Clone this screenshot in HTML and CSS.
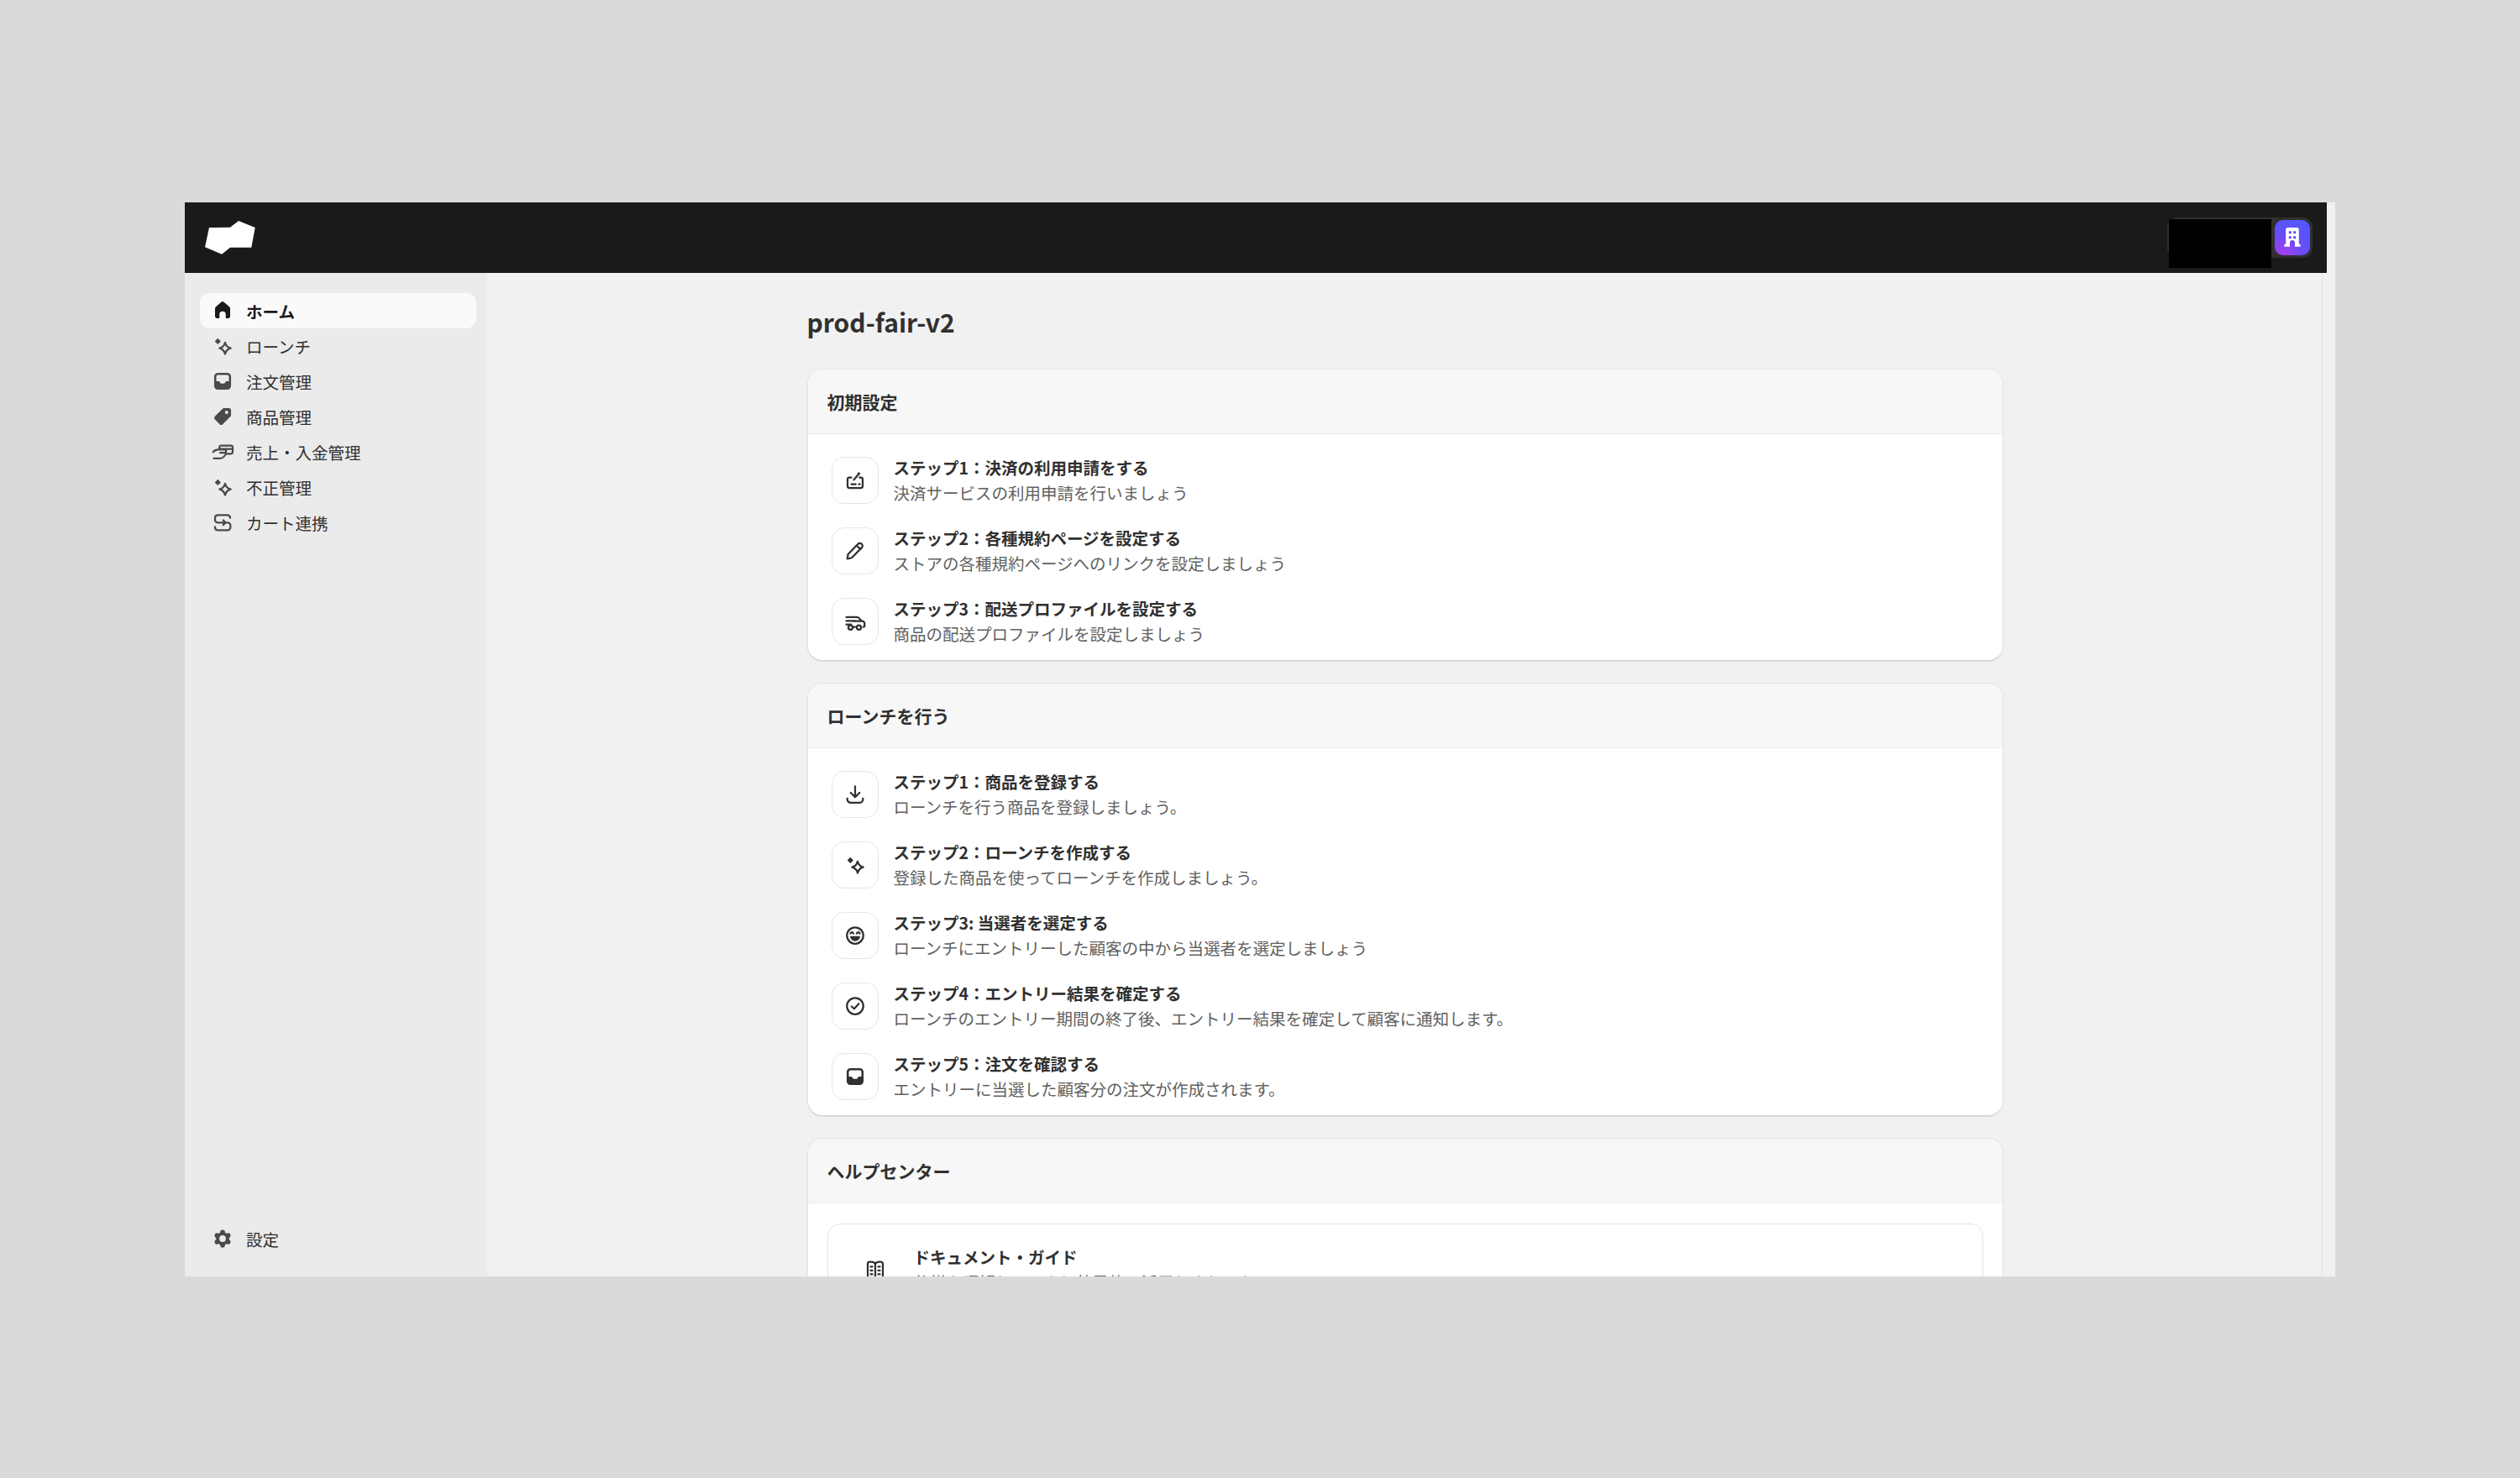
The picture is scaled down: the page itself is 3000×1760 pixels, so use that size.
FILE: index.html
```html
<!DOCTYPE html>
<html lang="ja">
<head>
<meta charset="utf-8">
<title>prod-fair-v2</title>
<link rel="stylesheet" href="styles.css">
</head>
<body>
<svg class="defs" width="0" height="0" aria-hidden="true">
  <symbol id="i-sparkle" viewBox="0 0 20 20">
    <path class="fill" d="M6.2 3.8 8.6 6.3 6.2 8.7 3.8 6.3Z"/>
    <path class="line" d="M12 7.2c.6 2.6 1.8 3.9 4.4 4.6-2.6.7-3.8 2-4.4 4.6-.6-2.6-1.8-3.9-4.4-4.6 2.6-.7 3.8-2 4.4-4.6Z"/>
  </symbol>
  <symbol id="i-inbox" viewBox="0 0 20 20">
    <path class="fill" fill-rule="evenodd" d="M6.3 3.3h7.4a3 3 0 0 1 3 3v7.4a3 3 0 0 1-3 3H6.3a3 3 0 0 1-3-3V6.3a3 3 0 0 1 3-3ZM6.3 5A1.3 1.3 0 0 0 5 6.300V10h2.300c.5 1.300 1.400 1.900 2.700 1.900s2.200-.6 2.700-1.900H15V6.300A1.300 1.300 0 0 0 13.700 5Z"/>
  </symbol>
</svg>
<div class="window">
  <header class="topbar">
    <svg class="logo" viewBox="0 0 60 40"><path d="M5 8 30 7.700 40 0 59.700 8 55.300 31.700H30L20 39.700 0 31.300Z"/></svg>
    <div class="account">
      <div class="account-name"></div>
      <div class="account-icon">
        <svg viewBox="0 0 30 30"><path fill-rule="evenodd" d="M10.500 5h9A2 2 0 0 1 21.500 7V21.500H23V24H17.500V20a2.500 2.500 0 0 0-5 0V24H7V21.500H8.500V7a2 2 0 0 1 2-2ZM11.500 8.500V11H14V8.500ZM16 8.500V11H18.500V8.500ZM11.500 13.500V16H14V13.500ZM16 13.500V16H18.500V13.500Z"/></svg>
      </div>
    </div>
  </header>
  <div class="frame">
    <nav class="sidebar">
      <ul class="nav-list">
        <li class="nav-item active"><svg class="nav-icon" viewBox="0 0 20 20"><path class="fill" d="M8.900 3.200a1.700 1.700 0 0 1 2.200 0L15.300 6.800A2 2 0 0 1 16 8.300V14.500A1.500 1.500 0 0 1 14.500 16H12.500V13a2.500 2.500 0 0 0-5 0V16H5.500A1.500 1.500 0 0 1 4 14.500V8.300A2 2 0 0 1 4.700 6.800Z"/></svg>ホーム</li>
        <li class="nav-item"><svg class="nav-icon"><use href="#i-sparkle"/></svg>ローンチ</li>
        <li class="nav-item"><svg class="nav-icon"><use href="#i-inbox"/></svg>注文管理</li>
        <li class="nav-item"><svg class="nav-icon" viewBox="0 0 20 20"><path class="fill" fill-rule="evenodd" d="M11.200 3.300H15A1.700 1.700 0 0 1 16.700 5V8.800A1.700 1.700 0 0 1 16.200 10L10.100 16.100A1.700 1.700 0 0 1 7.700 16.100L3.900 12.300A1.700 1.700 0 0 1 3.900 9.900L10 3.800A1.700 1.700 0 0 1 11.200 3.300ZM13.200 5.400a1.300 1.300 0 1 0 0 2.600 1.300 1.300 0 0 0 0-2.600Z"/></svg>商品管理</li>
        <li class="nav-item"><svg class="nav-icon" viewBox="0 0 20 20"><path class="line" d="M7.500 8V6.500A1.500 1.500 0 0 1 9 5H16.500A1.500 1.500 0 0 1 18 6.500V10A1.500 1.500 0 0 1 16.500 11.500H13.500M8 7.800H18M2.500 10.200C3.500 8.800 5 8.200 6.500 8.200H11.500A1.300 1.300 0 0 1 11.500 10.800H8M3 15.300H8C10 15.300 11.200 14 12.500 12"/></svg>売上・入金管理</li>
        <li class="nav-item"><svg class="nav-icon"><use href="#i-sparkle"/></svg>不正管理</li>
        <li class="nav-item"><svg class="nav-icon" viewBox="0 0 20 20"><path class="line" d="M16 6.500V6A2.200 2.200 0 0 0 13.800 4.200H6A2.200 2.200 0 0 0 4 6.400V8A2.200 2.200 0 0 0 6.200 10.200H13.800A2.200 2.200 0 0 1 16.200 12.400V14A2.200 2.200 0 0 1 14 16.200H6A2.200 2.200 0 0 1 4 14V13.500M10.500 8.300 12.400 10.200 10.500 12.100"/></svg>カート連携</li>
      </ul>
      <ul class="nav-list">
        <li class="nav-item"><svg class="nav-icon" viewBox="0 0 20 20"><g class="fill"><circle cx="10" cy="4.900" r="1.900"/><circle cx="10" cy="15.100" r="1.900"/><circle cx="5.600" cy="7.450" r="1.900"/><circle cx="14.400" cy="7.450" r="1.900"/><circle cx="5.600" cy="12.550" r="1.900"/><circle cx="14.400" cy="12.550" r="1.900"/></g><circle class="ring" cx="10" cy="10" r="3.900"/></svg>設定</li>
      </ul>
    </nav>
    <main class="main">
      <div class="content">
        <h1 class="page-title">prod-fair-v2</h1>
        <section class="card">
          <h2 class="card-head">初期設定</h2>
          <div class="card-body">
            <div class="row">
              <div class="icon-box"><svg class="box-icon" viewBox="0 0 20 20"><path class="line" d="M7 7.800H5.500A1.500 1.500 0 0 0 4 9.300V14.500A1.500 1.500 0 0 0 5.500 16H14.500A1.500 1.500 0 0 0 16 14.500V9.300A1.500 1.500 0 0 0 14.500 7.800H13.500M9 9.600 12 6M7 13H10.500M13 13H13.700"/><path class="fill" d="M13 3.300 14.300 4.800 12.800 6.100 11.500 4.600Z"/></svg></div>
              <div class="row-text"><div class="row-title">ステップ1：決済の利用申請をする</div><div class="row-sub">決済サービスの利用申請を行いましょう</div></div>
            </div>
            <div class="row">
              <div class="icon-box"><svg class="box-icon" viewBox="0 0 20 20"><path class="line" d="M3.800 16.200 4.400 12.700 12.300 4.500A1.900 1.900 0 0 1 15 4.400L15.300 4.700A1.900 1.900 0 0 1 15.300 7.400L7.300 15.500ZM11.200 5.800 14.200 8.600"/></svg></div>
              <div class="row-text"><div class="row-title">ステップ2：各種規約ページを設定する</div><div class="row-sub">ストアの各種規約ページへのリンクを設定しましょう</div></div>
            </div>
            <div class="row">
              <div class="icon-box"><svg class="box-icon" viewBox="0 0 20 20"><path class="line" d="M3 6.500H11.300C12.100 6.500 12.700 6.800 13.200 7.400L15.200 9.800H15.700A1.800 1.800 0 0 1 17.500 11.600V13.300A1.100 1.100 0 0 1 16.400 14.400M3 9.500H10.500M15.200 9.800H8.500M3 12.400H6.800M10 14.400H9"/><circle class="line" cx="6.300" cy="14.800" r="1.700"/><circle class="line" cx="13" cy="14.800" r="1.700"/></svg></div>
              <div class="row-text"><div class="row-title">ステップ3：配送プロファイルを設定する</div><div class="row-sub">商品の配送プロファイルを設定しましょう</div></div>
            </div>
          </div>
        </section>
        <section class="card">
          <h2 class="card-head">ローンチを行う</h2>
          <div class="card-body">
            <div class="row">
              <div class="icon-box"><svg class="box-icon" viewBox="0 0 20 20"><path class="line" d="M10 3.500V12M6.500 8.700 10 12.200 13.500 8.700M3.800 13.200V14A2.500 2.500 0 0 0 6.300 16.500H13.700A2.500 2.500 0 0 0 16.200 14V13.200"/></svg></div>
              <div class="row-text"><div class="row-title">ステップ1：商品を登録する</div><div class="row-sub">ローンチを行う商品を登録しましょう。</div></div>
            </div>
            <div class="row">
              <div class="icon-box"><svg class="box-icon"><use href="#i-sparkle"/></svg></div>
              <div class="row-text"><div class="row-title">ステップ2：ローンチを作成する</div><div class="row-sub">登録した商品を使ってローンチを作成しましょう。</div></div>
            </div>
            <div class="row">
              <div class="icon-box"><svg class="box-icon" viewBox="0 0 20 20"><circle class="line" cx="10" cy="10" r="6.500"/><path class="fill" d="M6 10.500H14A4 4 0 0 1 6 10.500Z"/><path class="line" d="M6.300 8.400C6.800 7 8.200 7 8.700 8.400M11.300 8.400C11.800 7 13.200 7 13.700 8.400"/></svg></div>
              <div class="row-text"><div class="row-title">ステップ3: 当選者を選定する</div><div class="row-sub">ローンチにエントリーした顧客の中から当選者を選定しましょう</div></div>
            </div>
            <div class="row">
              <div class="icon-box"><svg class="box-icon" viewBox="0 0 20 20"><circle class="line" cx="10" cy="10" r="6.500"/><path class="line" d="M7.200 10.300 9.200 12.200 12.900 8.200"/></svg></div>
              <div class="row-text"><div class="row-title">ステップ4：エントリー結果を確定する</div><div class="row-sub">ローンチのエントリー期間の終了後、エントリー結果を確定して顧客に通知します。</div></div>
            </div>
            <div class="row">
              <div class="icon-box"><svg class="box-icon"><use href="#i-inbox"/></svg></div>
              <div class="row-text"><div class="row-title">ステップ5：注文を確認する</div><div class="row-sub">エントリーに当選した顧客分の注文が作成されます。</div></div>
            </div>
          </div>
        </section>
        <section class="card">
          <h2 class="card-head">ヘルプセンター</h2>
          <div class="card-body help-body">
            <div class="help-card">
              <div class="row">
                <div class="icon-box plain"><svg class="box-icon" viewBox="0 0 20 20"><path class="line" d="M10 5.500V17M10 5.500C9.500 4.500 8.500 3.800 7 3.800H5.500A1.500 1.500 0 0 0 4 5.300V15.500A1.500 1.500 0 0 0 5.500 17H14.500A1.500 1.500 0 0 0 16 15.500V5.300A1.500 1.500 0 0 0 14.500 3.800H13C11.500 3.800 10.500 4.500 10 5.500ZM6.300 7.500H7.700M6.300 10.500H7.700M6.300 13.500H7.700M12.300 7.500H13.700M12.300 10.500H13.700M12.300 13.500H13.700"/></svg></div>
                <div class="row-text"><div class="row-title">ドキュメント・ガイド</div><div class="row-sub">仕様を理解して、より効果的に活用しましょう</div></div>
              </div>
            </div>
          </div>
        </section>
      </div>
    </main>
    <div class="scrollbar"></div>
  </div>
</div>
</body>
</html>
```
FILE: styles.css
```css
* { box-sizing: border-box; }
html, body { margin: 0; padding: 0; }
body {
  width: 3000px;
  height: 1760px;
  overflow: hidden;
  background: #dadada;
  padding: 241px 0 0 220px;
  font-family: "Noto Sans CJK JP", sans-serif;
  color: #303030;
}
.defs { display: block; height: 0; }
.fill { fill: currentColor; stroke: none; }
.line { fill: none; stroke: currentColor; stroke-width: 1.5; stroke-linecap: round; stroke-linejoin: round; }
.ring { fill: none; stroke: currentColor; stroke-width: 2.600; }

.window {
  width: 2560px;
  height: 1279px;
  background: #f1f1f1;
  display: flex;
  flex-direction: column;
  overflow: hidden;
}
.topbar {
  flex: none;
  width: 2550px;
  height: 84px;
  background: #1a1a1a;
  display: flex;
  align-items: flex-start;
  justify-content: space-between;
  padding: 22px 17px 0 24px;
}
.logo { width: 60px; height: 40px; fill: #fff; }
.account {
  display: flex;
  align-items: center;
  justify-content: flex-end;
  width: 173px;
  height: 48px;
  margin-top: -4px;
  padding-right: 3px;
  background: #303030;
  border-radius: 12px;
  position: relative;
}
.account-name {
  position: absolute;
  left: 2px;
  top: 2px;
  width: 122px;
  height: 58px;
  background: #000;
}
.account-icon {
  width: 42px;
  height: 42px;
  border-radius: 10px;
  background: radial-gradient(circle at 22% 100%, #a83ff0 0%, #6a4cf6 45%, #4a5cff 100%);
  display: flex;
  align-items: center;
  justify-content: center;
}
.account-icon svg { width: 36px; height: 36px; fill: #fff; }

.frame { flex: 1; min-height: 0; display: flex; }
.sidebar {
  flex: none;
  width: 360px;
  background: #ebebeb;
  padding: 24px 13px 24px 18px;
  display: flex;
  flex-direction: column;
  justify-content: space-between;
}
.nav-list { list-style: none; margin: 0; padding: 0; }
.nav-item {
  height: 42px;
  display: flex;
  align-items: center;
  gap: 13px;
  padding-left: 12px;
  border-radius: 12px;
  font-size: 19.5px;
  color: #303030;
}
.nav-item.active { background: #fafafa; font-weight: 600; color: #1a1a1a; }
.nav-icon { flex: none; width: 30px; height: 30px; color: #4a4a4a; }
.nav-item.active .nav-icon { color: #1a1a1a; }

.main { flex: 1; min-width: 0; overflow: hidden; padding: 40px 0 0 1px; display: flex; justify-content: center; }
.content { width: 1424px; flex: none; }
.page-title { margin: 0 0 38px; font-size: 30px; line-height: 36px; font-weight: 700; color: #303030; }
.scrollbar { flex: none; width: 16px; background: #f1f1f1; border-left: 1px solid #e3e3e3; }

.card {
  background: #fff;
  border: 1px solid #e3e3e3;
  border-bottom-color: #d4d4d4;
  border-radius: 18px;
  box-shadow: 0 1px 1px rgba(0, 0, 0, .08);
  overflow: hidden;
  margin-bottom: 26px;
}
.card-head {
  margin: 0;
  height: 77px;
  padding: 0 23px;
  display: flex;
  align-items: center;
  background: #f7f7f7;
  border-bottom: 1px solid #ebebeb;
  font-size: 21px;
  font-weight: 700;
  color: #303030;
}
.card-body { padding: 25px 28px 16px; display: flex; flex-direction: column; gap: 24px; }
.row { display: flex; align-items: center; gap: 18px; }
.icon-box {
  flex: none;
  width: 56px;
  height: 56px;
  border: 1px solid #e6e6e6;
  border-radius: 15px;
  display: flex;
  align-items: center;
  justify-content: center;
}
.icon-box.plain { border-color: transparent; }
.box-icon { width: 30px; height: 30px; color: #303030; }
.row-text { font-size: 19.5px; line-height: 30px; }
.row-title { font-weight: 700; color: #303030; }
.row-sub { color: #616161; }
.help-body { padding: 24px 23px; }
.help-card {
  border: 1px solid #e3e3e3;
  border-radius: 15px;
  padding: 24px 28px;
}
```
